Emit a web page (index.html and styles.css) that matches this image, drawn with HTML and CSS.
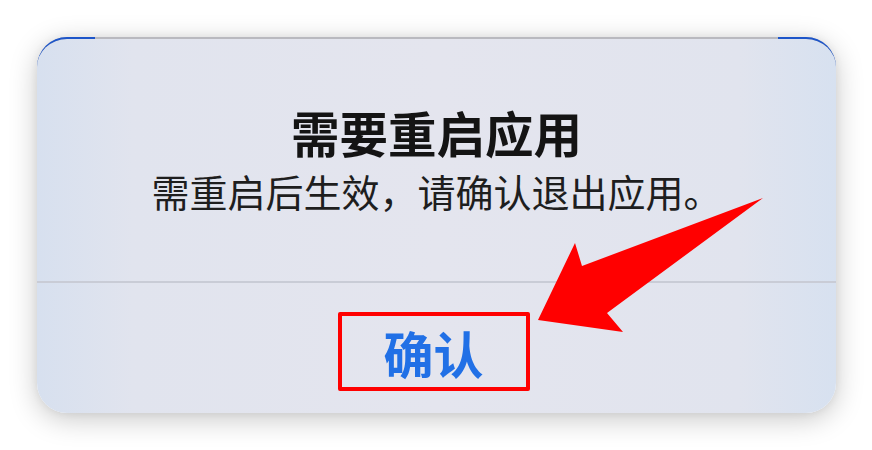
FILE: index.html
```html
<!DOCTYPE html>
<html lang="zh-CN">
<head>
<meta charset="utf-8">
<link rel="stylesheet" href="styles.css">
</head>
<body>
<div class="page">
  <div class="dialog">
    <div class="corner corner-left"></div>
    <div class="corner corner-right"></div>
    <div class="content">
      <h1 class="title">需要重启应用</h1>
      <p class="message">需重启后生效，请确认退出应用。</p>
    </div>
    <div class="divider"></div>
    <div class="actions">
      <button class="confirm">确认</button>
    </div>
  </div>
  <svg class="arrow" width="872" height="450" viewBox="0 0 872 450">
    <polygon points="538,320 575,243 582,266 763,198 607,313 623,332" fill="#ff0000"/>
  </svg>
</div>
</body>
</html>
```
FILE: styles.css
```css
html, body {
  margin: 0;
  padding: 0;
  background: #ffffff;
}
.page {
  position: relative;
  width: 872px;
  height: 450px;
  padding: 37px 0 0 37px;
  box-sizing: border-box;
  font-family: "Noto Sans CJK SC", "Noto Sans", sans-serif;
}
.dialog {
  position: relative;
  width: 799px;
  height: 376px;
  border-radius: 30px;
  border-top: 2px solid #b9b9bf;
  box-sizing: border-box;
  background: linear-gradient(90deg, #d7e0ef 0%, #e1e4ee 12%, #e4e5ee 50%, #e1e4ee 88%, #d7e1f0 100%);
  box-shadow: 0 6px 28px rgba(0, 0, 0, 0.22), 0 0 8px rgba(0, 0, 0, 0.06);
  display: flex;
  flex-direction: column;
}
.corner {
  position: absolute;
  top: -2px;
  height: 30px;
  border-top: 2px solid #1d55c9;
  box-sizing: border-box;
}
.corner-left {
  left: 0;
  border-top-left-radius: 30px;
  width: 58px;
}
.corner-right {
  right: 0;
  border-top-right-radius: 30px;
  width: 58px;
}
.content {
  height: 242px;
  display: flex;
  flex-direction: column;
  align-items: center;
  padding-top: 63px;
  box-sizing: border-box;
}
.title {
  margin: 0;
  font-size: 48.5px;
  line-height: 60px;
  font-weight: 700;
  color: #141414;
}
.message {
  margin: 4px 0 0 0;
  font-size: 38px;
  line-height: 50px;
  font-weight: 400;
  color: #1e1e1e;
}
.divider {
  height: 2px;
  background: #c9ccd6;
}
.actions {
  flex: 1;
  display: flex;
  justify-content: center;
  align-items: flex-start;
  padding-top: 29px;
  padding-right: 6px;
}
.confirm {
  width: 192px;
  height: 79px;
  border: 4px solid #ff0000;
  border-radius: 2px;
  background: transparent;
  font-family: "Noto Sans CJK SC", "Noto Sans", sans-serif;
  font-size: 50px;
  font-weight: 700;
  color: #2170e6;
  padding: 0;
  line-height: 1;
}
.arrow {
  position: absolute;
  left: 0;
  top: 0;
  pointer-events: none;
}
```
